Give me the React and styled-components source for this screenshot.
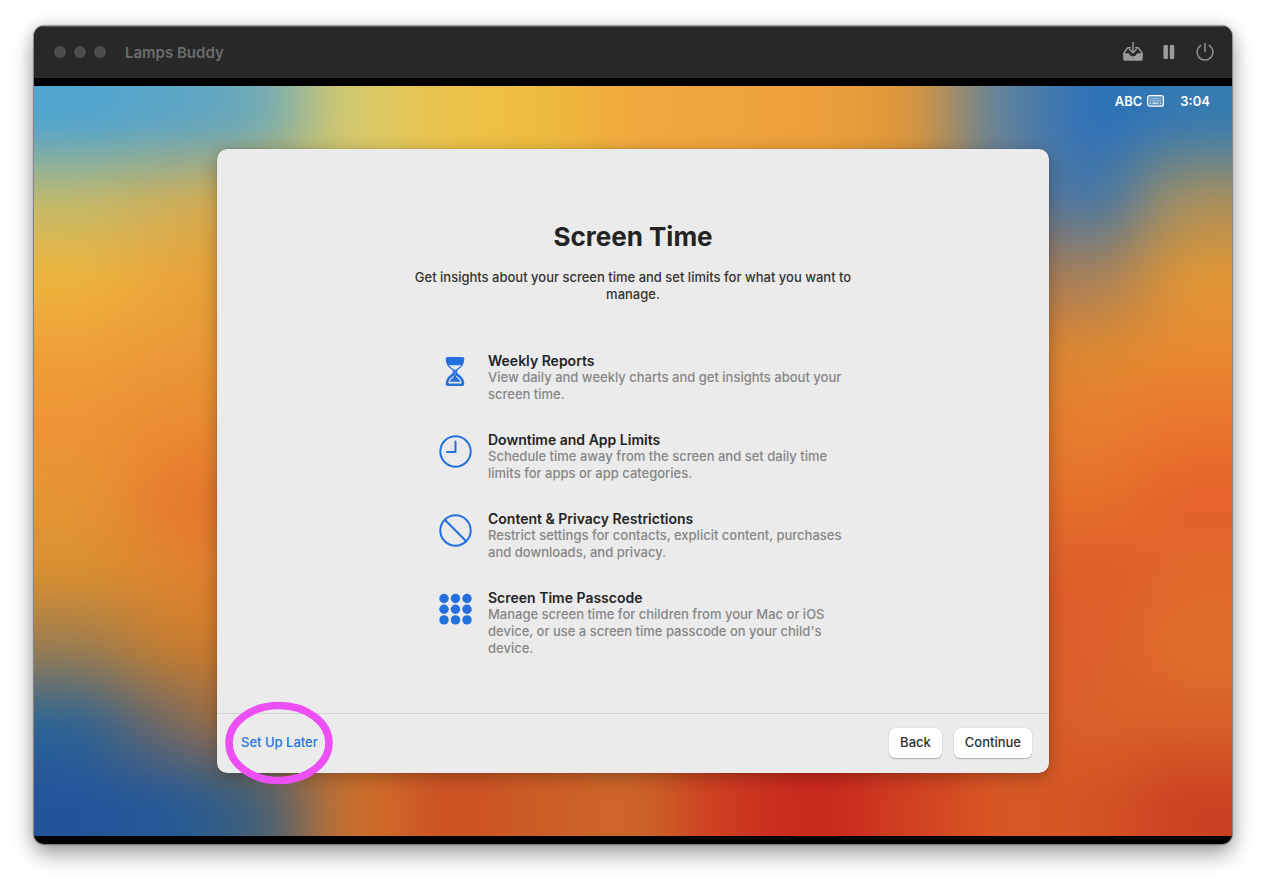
import React from "react";
import styled, { createGlobalStyle } from "styled-components";

const Page = createGlobalStyle`
  *, *::before, *::after { box-sizing: border-box; }
  body { margin: 0; background: #fff; font-family: Inter, "Liberation Sans", sans-serif; }
  h1, h2, p, ul { margin: 0; padding: 0; }
`;

const Stage = styled.div`
  min-height: 100vh;
  display: flex;
  padding: 26px 34px 42px;
`;

const Window = styled.main`
  flex: 1;
  display: flex;
  flex-direction: column;
  background: #000;
  border-radius: 10px;
  overflow: hidden;
  box-shadow: 0 0 1px 1px rgba(0, 0, 0, 0.35), 0 10px 22px rgba(0, 0, 0, 0.36), 0 0 16px rgba(0, 0, 0, 0.14);
`;

const TitleBar = styled.header`
  height: 52px;
  flex: none;
  display: flex;
  align-items: center;
  padding: 0 16px 0 20px;
  background: #282828;
  box-shadow: inset 0 1px 0 #5c5c5c;
`;

const Lights = styled.div`
  display: flex;
  gap: 8px;
  margin-right: 19px;
`;

const Light = styled.button`
  width: 12px;
  height: 12px;
  padding: 0;
  border: 0;
  border-radius: 50%;
  background: #4d4d4d;
`;

const WindowTitle = styled.span`
  flex: 1;
  font-size: 15px;
  font-weight: 600;
  color: #6c6c6c;
`;

const Tools = styled.div`
  display: flex;
  align-items: center;
  gap: 14px;
`;

const ToolButton = styled.button`
  display: flex;
  padding: 0;
  border: 0;
  background: none;
  color: #9b9b9b;
`;

const Desktop = styled.div`
  flex: 1;
  position: relative;
  isolation: isolate;
  display: flex;
  flex-direction: column;
  margin: 8px 0;
  overflow: hidden;
`;

const Wallpaper = styled.svg`
  position: absolute;
  inset: 0;
  width: 100%;
  height: 100%;
  z-index: -1;
`;

const MenuBar = styled.div`
  display: flex;
  justify-content: flex-end;
  align-items: center;
  gap: 16px;
  height: 30px;
  padding: 0 22px;
  font-size: 13px;
  font-weight: 600;
  color: #fff;
`;

const InputSource = styled.span`
  display: flex;
  align-items: center;
  gap: 5px;
`;

const Dialog = styled.section`
  width: 832px;
  max-width: 100%;
  flex: 1;
  display: flex;
  flex-direction: column;
  align-self: center;
  margin: 33px 0 63px;
  border-radius: 10px;
  background: #ebebeb;
  box-shadow: 0 0 1px rgba(0, 0, 0, 0.5), 0 4px 18px rgba(0, 0, 0, 0.28);
`;

const Body = styled.div`
  flex: 1;
  display: flex;
  flex-direction: column;
  align-items: center;
  padding-top: 70px;
`;

const Heading = styled.h1`
  font-size: 26px;
  line-height: 36px;
  font-weight: 700;
  color: #232323;
`;

const Intro = styled.p`
  width: 460px;
  margin-top: 14px;
  text-align: center;
  font-size: 13px;
  line-height: 17px;
  font-weight: 500;
  color: #333;
`;

const Features = styled.ul`
  width: 430px;
  display: flex;
  flex-direction: column;
  gap: 28px;
  margin-top: 49px;
  padding-left: 20px;
  list-style: none;
`;

const Feature = styled.li`
  display: flex;
  gap: 16px;
`;

const FeatureIcon = styled.svg`
  width: 34px;
  height: 34px;
  flex: none;
  margin-top: 3px;
  color: #2470dd;
`;

const FeatureText = styled.div`
  flex: 1;
`;

const FeatureTitle = styled.h2`
  font-size: 14px;
  line-height: 17px;
  font-weight: 600;
  color: #242424;
`;

const FeatureNote = styled.p`
  font-size: 13px;
  line-height: 17px;
  font-weight: 500;
  color: #868686;
`;

const Footer = styled.footer`
  display: flex;
  align-items: center;
  justify-content: space-between;
  height: 60px;
  padding: 0 17px 2px 24px;
  border-top: 1px solid #d3d3d3;
`;

const LaterButton = styled.button`
  position: relative;
  padding: 0;
  border: 0;
  background: none;
  font: 500 13px/17px Inter, sans-serif;
  color: #2376dc;
`;

const Marker = styled.svg`
  position: absolute;
  left: 50%;
  top: 50%;
  width: 108px;
  height: 83px;
  transform: translate(-50%, -50%);
  pointer-events: none;
`;

const Actions = styled.div`
  display: flex;
  gap: 12px;
`;

const PushButton = styled.button`
  height: 30px;
  padding: 0 11px;
  border: 0;
  border-radius: 6px;
  background: #fff;
  box-shadow: 0 0 1px rgba(0, 0, 0, 0.3), 0 1px 1px rgba(0, 0, 0, 0.22);
  font: 500 13px/17px Inter, sans-serif;
  color: #303030;
`;

const features = [
  {
    title: "Weekly Reports",
    note: "View daily and weekly charts and get insights about your screen time.",
    icon: (
      <>
        <path fill="currentColor" d="M9.800 2h14.400c1.500 0 2.200.8 2.100 2.200-.4 5.500-2.500 7.800-6.300 10.600-1.300 1-1.300 3 0 4 3.800 2.800 5.900 5 6.300 9.700.1 1.600-.6 2.500-2.100 2.500H9.800c-1.500 0-2.200-.9-2.100-2.500.4-4.700 2.500-6.900 6.300-9.700 1.300-1 1.300-3 0-4-3.800-2.800-5.900-5.100-6.300-10.600C7.600 2.800 8.300 2 9.800 2Z" />
        <path fill="#ebebeb" d="M10.800 10.200h12.400c-.9 1.300-2.500 2.400-4.200 3.600-.9.700-1.200 1.400-1.200 2.500v3.500c.2 1 1.200 1.600 2.400 2.500 1.900 1.400 3 2.900 3.300 5.100.1.700-.1 1.100-.8 1.100H11.300c-.7 0-.9-.4-.8-1.100.3-2.200 1.400-3.700 3.300-5.100 1.200-.9 2.200-1.500 2.400-2.500v-3.500c0-1.100-.3-1.800-1.200-2.500-1.700-1.200-3.300-2.300-4.200-3.600Z" />
        <path fill="currentColor" d="M16.200 14.500h1.600v6.500c.4 1.300 3.100 2.900 4.400 5 .3.500.1.800-.4.800h-9.600c-.5 0-.7-.3-.4-.8 1.300-2.100 4-3.700 4.400-5Z" />
      </>
    ),
  },
  {
    title: "Downtime and App Limits",
    note: "Schedule time away from the screen and set daily time limits for apps or app categories.",
    icon: (
      <g fill="none" stroke="currentColor" strokeWidth="2" strokeLinecap="round" strokeLinejoin="round">
        <circle cx="17.500" cy="17.500" r="15.200" />
        <path d="M17.500 7.500v10.500H9" />
      </g>
    ),
  },
  {
    title: "Content & Privacy Restrictions",
    note: "Restrict settings for contacts, explicit content, purchases and downloads, and privacy.",
    icon: (
      <g fill="none" stroke="currentColor" strokeWidth="2">
        <circle cx="17.500" cy="17.500" r="15.200" />
        <path d="m6.800 6.800 21.400 21.400" />
      </g>
    ),
  },
  {
    title: "Screen Time Passcode",
    note: "Manage screen time for children from your Mac or iOS device, or use a screen time passcode on your child's device.",
    icon: (
      <g fill="currentColor">
        {[6.500, 17.200, 27.900].map((y) =>
          [6, 17.500, 29].map((x) => <circle key={`${x}-${y}`} cx={x} cy={y} r="4.700" />)
        )}
      </g>
    ),
  },
];

/* Colour bands of the wallpaper: one per column, each listing its colours from top to bottom. */
const bands = [
  { x: 0, w: 92, colors: ["#50a4d0", "#c0ba6e", "#ecb63c", "#f0a038", "#ee9434", "#e59534", "#d8902f", "#9a7c50", "#2b6496", "#23549a"] },
  { x: 92, w: 92, colors: ["#5ca6c6", "#ccb05c", "#eaa63a", "#ea9b37", "#e98b32", "#e67c2f", "#e08530", "#c57e2e", "#77695f", "#255a96"] },
  { x: 184, w: 86, colors: ["#6caab8", "#dca842", "#e29a38", "#e89433", "#e8882f", "#e57026", "#de7a2c", "#d4782a", "#bd7230", "#3f6078"] },
  { x: 270, w: 100, colors: ["#d8ca6a", "#d8ca6a", "#cf722a", "#cf722a"] },
  { x: 370, w: 92, colors: ["#ecc248", "#ecc248", "#cd4f24", "#cd4f24"] },
  { x: 462, w: 92, colors: ["#eebc40", "#eebc40", "#cc5e26", "#cc5e26"] },
  { x: 554, w: 92, colors: ["#f0a83c", "#f0a83c", "#cc6828", "#cc6828"] },
  { x: 646, w: 92, colors: ["#f0a43c", "#f0a43c", "#cd3a20", "#cd3a20"] },
  { x: 738, w: 92, colors: ["#eda03a", "#eda03a", "#c9261b", "#c9261b"] },
  { x: 830, w: 92, colors: ["#dd9638", "#dd9638", "#d04021", "#d04021"] },
  { x: 922, w: 92, colors: ["#5c82a0", "#6d7a90", "#b07850", "#d5803a", "#e07a2e", "#e2702b", "#de602a", "#dc5a28", "#d95a26", "#d85a24"] },
  { x: 1014, w: 92, colors: ["#2c70b9", "#4076a8", "#9f8060", "#dd8a30", "#e88030", "#e5702a", "#e05e29", "#dd5f2a", "#da6028", "#d45424"] },
  { x: 1106, w: 92, colors: ["#357bb0", "#a8905e", "#df9634", "#e88a32", "#eb752d", "#e46229", "#e06829", "#df702b", "#d86026", "#c94122"] },
];

function DesktopWallpaper() {
  return (
    <Wallpaper viewBox="0 0 1198 750" preserveAspectRatio="none" aria-hidden="true">
      <defs>
        <filter id="soft" x="-20%" y="-20%" width="140%" height="140%" colorInterpolationFilters="sRGB">
          <feGaussianBlur stdDeviation="34 14" />
        </filter>
        {bands.map(({ x, colors }) => (
          <linearGradient key={x} id={`band-${x}`} gradientUnits="userSpaceOnUse" x1="0" y1="0" x2="0" y2="750">
            {colors.map((color, i) => (
              <stop key={i} offset={(i + 0.5) / colors.length} stopColor={color} />
            ))}
          </linearGradient>
        ))}
      </defs>
      <g filter="url(#soft)">
        {bands.map(({ x, w }, i) => {
          const left = i === 0 ? -150 : x;
          const right = i === bands.length - 1 ? 1348 : x + w + 1;
          return <rect key={x} x={left} y="-100" width={right - left} height="950" fill={`url(#band-${x})`} />;
        })}
      </g>
    </Wallpaper>
  );
}

export default function App() {
  return (
    <>
      <Page />
      <Stage>
        <Window>
          <TitleBar>
            <Lights>
              <Light aria-label="Close" />
              <Light aria-label="Minimize" />
              <Light aria-label="Zoom" />
            </Lights>
            <WindowTitle>Lamps Buddy</WindowTitle>
            <Tools>
              <ToolButton aria-label="Install">
                <svg width="22" height="22" viewBox="0 0 22 22">
                  <path fill="currentColor" d="M1.200 12.300h5.200c.5 0 .9.300 1 .8.4 1.300 1.800 2.300 3.600 2.300s3.200-1 3.600-2.300c.1-.5.500-.8 1-.8h5.200v5.500c0 1.300-.7 2-2 2H3.200c-1.300 0-2-.7-2-2Z" />
                  <path d="M1.700 12.500 5 7.600c.4-.6.800-.8 1.500-.8h1.800M13.700 6.800h1.800c.7 0 1.100.2 1.500.8l3.300 4.900M11 1.500v10M7.700 8.500l3.300 3.300 3.300-3.300" fill="none" stroke="currentColor" strokeWidth="1.400" strokeLinecap="round" strokeLinejoin="round" />
                </svg>
              </ToolButton>
              <ToolButton aria-label="Pause">
                <svg width="22" height="22" viewBox="0 0 22 22" fill="currentColor">
                  <rect x="5.500" y="4" width="4.400" height="14" rx="1" />
                  <rect x="11.800" y="4" width="4.400" height="14" rx="1" />
                </svg>
              </ToolButton>
              <ToolButton aria-label="Power">
                <svg width="22" height="22" viewBox="0 0 22 22" fill="none" stroke="currentColor" strokeWidth="1.400" strokeLinecap="round">
                  <path d="M11 2.500v8M6.800 4.300a8 8 0 1 0 8.400 0" />
                </svg>
              </ToolButton>
            </Tools>
          </TitleBar>
          <Desktop>
            <DesktopWallpaper />
            <MenuBar>
              <InputSource>
                ABC
                <svg width="17" height="12" viewBox="0 0 17 12" fill="none" stroke="currentColor">
                  <rect x=".6" y=".6" width="15.800" height="10.600" rx="2" strokeWidth="1.200" fill="#fff" fillOpacity=".22" />
                  <path d="M3 3.500h11M3 5.700h11" strokeDasharray="1 .6" strokeWidth="1.200" opacity=".5" />
                  <path d="M3 8.200h1M5.500 8.200h6M13 8.200h1" strokeWidth="1.200" opacity=".8" />
                </svg>
              </InputSource>
              <time>3:04</time>
            </MenuBar>
            <Dialog aria-labelledby="dialog-title">
              <Body>
                <Heading id="dialog-title">Screen Time</Heading>
                <Intro>Get insights about your screen time and set limits for what you want to manage.</Intro>
                <Features>
                  {features.map(({ title, note, icon }) => (
                    <Feature key={title}>
                      <FeatureIcon viewBox="0 0 34 34" aria-hidden="true">{icon}</FeatureIcon>
                      <FeatureText>
                        <FeatureTitle>{title}</FeatureTitle>
                        <FeatureNote>{note}</FeatureNote>
                      </FeatureText>
                    </Feature>
                  ))}
                </Features>
              </Body>
              <Footer>
                <LaterButton>
                  Set Up Later
                  <Marker viewBox="0 0 108 83" aria-hidden="true">
                    <ellipse cx="54" cy="41.500" rx="50" ry="37.500" fill="none" stroke="#ec50f4" strokeWidth="7.500" />
                  </Marker>
                </LaterButton>
                <Actions>
                  <PushButton>Back</PushButton>
                  <PushButton>Continue</PushButton>
                </Actions>
              </Footer>
            </Dialog>
          </Desktop>
        </Window>
      </Stage>
    </>
  );
}
